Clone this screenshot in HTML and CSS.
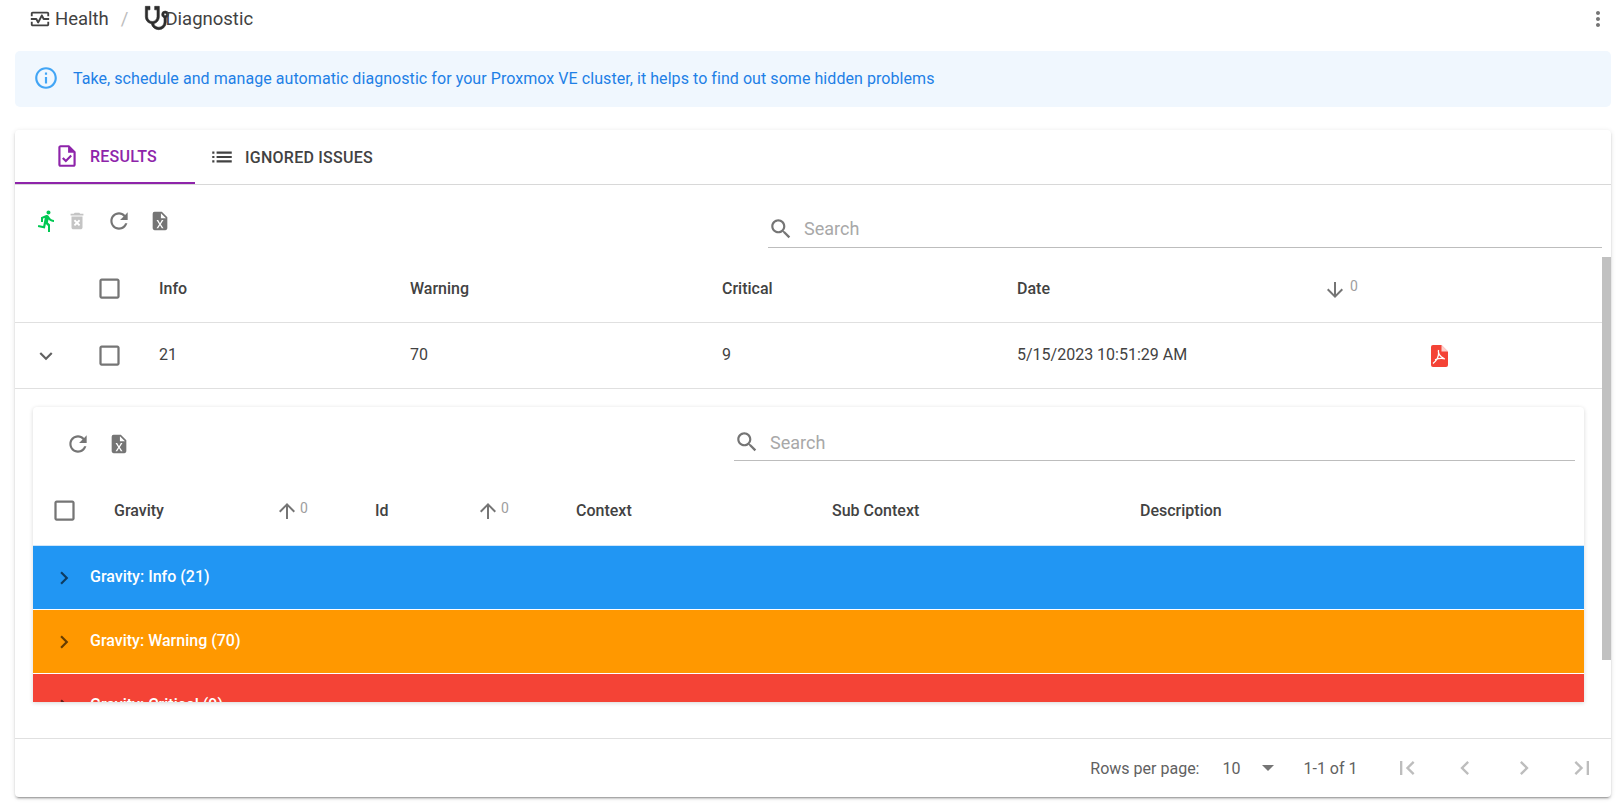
FILE: index.html
```html
<!DOCTYPE html>
<html lang="en">
<head>
    <meta charset="UTF-8">
    <meta name="viewport" content="width=device-width, initial-scale=1.0">
    <title>Health / Diagnostic</title>
    <link rel="stylesheet" href="styles.css">
</head>
<body>
    <svg class="sprite" xmlns="http://www.w3.org/2000/svg">
        <symbol id="i-health" viewBox="0 0 24 24"><path d="M20 4H4c-1.1 0-2 .9-2 2v3h2V6h16v3h2V6c0-1.1-.9-2-2-2zm0 14H4v-3H2v3c0 1.1.9 2 2 2h16c1.1 0 2-.9 2-2v-3h-2v3z"/><path d="M14.89 7.55c-.34-.68-1.45-.68-1.79 0L10 13.76l-1.11-2.21c-.17-.34-.51-.55-.89-.55H2v2h5.38l1.72 3.45c.18.34.52.55.9.55s.72-.21.89-.55L14 10.24l1.11 2.21c.17.34.51.55.89.55h6v-2h-5.38l-1.73-3.45z"/></symbol>
        <symbol id="i-stethoscope" viewBox="0 0 24 24"><path d="M19 8C19.56 8 20 8.43 20 9A1 1 0 0 1 19 10C18.43 10 18 9.55 18 9C18 8.43 18.43 8 19 8M2 2V11C2 13.96 4.19 16.5 7.14 16.91C7.76 19.92 10.42 22 13.5 22A6.5 6.5 0 0 0 20 15.5V11.81C21.16 11.39 22 10.29 22 9A3 3 0 0 0 19 6A3 3 0 0 0 16 9C16 10.29 16.84 11.4 18 11.81V15.41C18 17.91 16 19.91 13.5 19.91C11.5 19.91 9.82 18.7 9.22 16.9C12 16.3 14 13.8 14 11V2H10V5H12V11A4 4 0 0 1 8 15A4 4 0 0 1 4 11V5H6V2H2Z"/></symbol>
        <symbol id="i-more" viewBox="0 0 24 24"><path d="M12 8c1.1 0 2-.9 2-2s-.9-2-2-2-2 .9-2 2 .9 2 2 2zm0 2c-1.1 0-2 .9-2 2s.9 2 2 2 2-.9 2-2-.9-2-2-2zm0 6c-1.1 0-2 .9-2 2s.9 2 2 2 2-.9 2-2-.9-2-2-2z"/></symbol>
        <symbol id="i-info" viewBox="0 0 24 24"><path d="M11 7h2v2h-2zm0 4h2v6h-2zm1-9C6.48 2 2 6.48 2 12s4.48 10 10 10 10-4.48 10-10S17.52 2 12 2zm0 18c-4.41 0-8-3.59-8-8s3.59-8 8-8 8 3.59 8 8-3.59 8-8 8z"/></symbol>
        <symbol id="i-task" viewBox="0 0 24 24"><path d="M14 2H6c-1.1 0-1.99.9-1.99 2L4 20c0 1.1.89 2 1.99 2H18c1.1 0 2-.9 2-2V8l-6-6zm4 18H6V4h7v5h5v11zm-9.18-6.95L7.4 14.46 10.94 18l5.66-5.66-1.41-1.41-4.24 4.24-2.13-2.12z"/></symbol>
        <symbol id="i-list" viewBox="0 0 24 24"><path d="M3 13h2v-2H3v2zm0 4h2v-2H3v2zm0-8h2V7H3v2zm4 4h14v-2H7v2zm0 4h14v-2H7v2zM7 7v2h14V7H7z"/></symbol>
        <symbol id="i-run" viewBox="0 0 24 24"><path d="M13.49 5.48c1.1 0 2-.9 2-2s-.9-2-2-2-2 .9-2 2 .9 2 2 2zm-3.6 13.9l1-4.4 2.1 2v6h2v-7.5l-2.1-2 .6-3c1.3 1.5 3.3 2.5 5.5 2.5v-2c-1.9 0-3.5-1-4.3-2.4l-1-1.6c-.4-.6-1-1-1.7-1-.3 0-.5.1-.8.1l-5.2 2.2v4.7h2v-3.4l1.8-.7-1.6 8.1-4.9-1-.4 2 7 1.4z"/></symbol>
        <symbol id="i-delete" viewBox="0 0 24 24"><path d="M6 19c0 1.1.9 2 2 2h8c1.1 0 2-.9 2-2V7H6v12zm2.46-7.12l1.41-1.41L12 12.59l2.12-2.12 1.41 1.41L13.41 14l2.12 2.12-1.41 1.41L12 15.41l-2.12 2.12-1.41-1.41L10.59 14l-2.13-2.12zM15.5 4l-1-1h-5l-1 1H5v2h14V4z"/></symbol>
        <symbol id="i-refresh" viewBox="0 0 24 24"><path d="M17.65 6.35C16.2 4.9 14.21 4 12 4c-4.42 0-7.99 3.58-7.99 8s3.57 8 7.99 8c3.73 0 6.84-2.55 7.73-6h-2.08c-.82 2.33-3.04 4-5.65 4-3.31 0-6-2.69-6-6s2.69-6 6-6c1.66 0 3.14.69 4.22 1.78L13 11h7V4l-2.35 2.35z"/></symbol>
        <symbol id="i-xls" viewBox="0 0 24 24"><path d="M14 2H6a2 2 0 0 0-2 2v16a2 2 0 0 0 2 2h12a2 2 0 0 0 2-2V8l-6-6m1.8 18H14l-2-3.4-2 3.4H8.2l2.9-4.5L8.2 11H10l2 3.4 2-3.4h1.8l-2.9 4.5 2.9 4.5M13 9V3.5L18.5 9H13z"/></symbol>
        <symbol id="i-search" viewBox="0 0 24 24"><path d="M15.5 14h-.79l-.28-.27C15.41 12.59 16 11.11 16 9.5 16 5.91 13.09 3 9.5 3S3 5.91 3 9.5 5.91 16 9.5 16c1.61 0 3.09-.59 4.23-1.57l.27.28v.79l5 4.99L20.49 19l-4.99-5zm-6 0C7.01 14 5 11.99 5 9.5S7.01 5 9.5 5 14 7.01 14 9.5 11.99 14 9.5 14z"/></symbol>
        <symbol id="i-checkbox" viewBox="0 0 24 24"><path d="M19 5v14H5V5h14m0-2H5c-1.1 0-2 .9-2 2v14c0 1.1.9 2 2 2h14c1.1 0 2-.9 2-2V5c0-1.1-.9-2-2-2z"/></symbol>
        <symbol id="i-down" viewBox="0 0 24 24"><path d="M20 12l-1.41-1.41L13 16.17V4h-2v12.17l-5.58-5.59L4 12l8 8 8-8z"/></symbol>
        <symbol id="i-up" viewBox="0 0 24 24"><path d="M4 12l1.41 1.41L11 7.83V20h2V7.83l5.58 5.59L20 12l-8-8-8 8z"/></symbol>
        <symbol id="i-expand" viewBox="0 0 24 24"><path d="M16.59 8.59L12 13.17 7.41 8.59 6 10l6 6 6-6z"/></symbol>
        <symbol id="i-chevron" viewBox="0 0 24 24"><path d="M8.59 16.59L13.17 12 8.59 7.41 10 6l6 6-6 6-1.41-1.41z"/></symbol>
        <symbol id="i-first" viewBox="0 0 24 24"><path d="M18.41 16.59L13.82 12l4.59-4.59L17 6l-6 6 6 6zM6 6h2v12H6z"/></symbol>
        <symbol id="i-prev" viewBox="0 0 24 24"><path d="M15.41 7.41L14 6l-6 6 6 6 1.41-1.41L10.83 12z"/></symbol>
        <symbol id="i-next" viewBox="0 0 24 24"><path d="M10 6L8.59 7.41 13.17 12l-4.58 4.59L10 18l6-6z"/></symbol>
        <symbol id="i-last" viewBox="0 0 24 24"><path d="M5.59 7.41L10.18 12l-4.59 4.59L7 18l6-6-6-6zM16 6h2v12h-2z"/></symbol>
        <symbol id="i-pdf" viewBox="0 0 24 24"><path d="M6 1h8.5L21 7.5V21a2 2 0 0 1-2 2H6a2 2 0 0 1-2-2V3a2 2 0 0 1 2-2z" fill="#f44336"/><path d="M14.5 1v6.5H21z" fill="#fff" opacity=".75"/><path d="M11.5 6c-.7 3 .6 6 5.5 8.5M11.6 8c.3 4-2 8.600-5.600 11.500M8 15.800c3-1.300 6.500-1.800 10-1" fill="none" stroke="#fff" stroke-width="1.300"/></symbol>
    </svg>

    <div class="topbar">
        <div class="crumbs">
            <svg class="ico ico-health"><use href="#i-health"/></svg>
            <span>Health</span>
            <span class="crumb-sep">/</span>
            <svg class="ico ico-steth"><use href="#i-stethoscope"/></svg>
            <span class="crumb-last">Diagnostic</span>
        </div>
        <svg class="ico ico-more"><use href="#i-more"/></svg>
    </div>

    <div class="alert">
        <svg class="ico ico-info"><use href="#i-info"/></svg>
        <span class="alert-text">Take, schedule and manage automatic diagnostic for your Proxmox VE cluster, it helps to find out some hidden problems</span>
    </div>

    <div class="card">
        <div class="tabs">
            <div class="tab tab-active">
                <svg class="ico"><use href="#i-task"/></svg>
                <span>Results</span>
            </div>
            <div class="tab">
                <svg class="ico"><use href="#i-list"/></svg>
                <span>Ignored Issues</span>
            </div>
        </div>

        <div class="toolbar">
            <div class="actions">
                <svg class="ico act-run"><use href="#i-run"/></svg>
                <svg class="ico act-delete"><use href="#i-delete"/></svg>
                <svg class="ico act-refresh"><use href="#i-refresh"/></svg>
                <svg class="ico act-xls"><use href="#i-xls"/></svg>
            </div>
            <div class="search search-main">
                <svg class="ico"><use href="#i-search"/></svg>
                <span>Search</span>
            </div>
        </div>

        <div class="scroller">
            <div class="grid-row grid-head">
                <span></span>
                <svg class="ico check"><use href="#i-checkbox"/></svg>
                <span>Info</span>
                <span>Warning</span>
                <span>Critical</span>
                <span>Date</span>
                <span class="sort"><svg class="ico"><use href="#i-down"/></svg><sup>0</sup></span>
                <span></span>
            </div>
            <div class="grid-row grid-body">
                <svg class="ico expand"><use href="#i-expand"/></svg>
                <svg class="ico check"><use href="#i-checkbox"/></svg>
                <span>21</span>
                <span>70</span>
                <span>9</span>
                <span>5/15/2023 10:51:29 AM</span>
                <span></span>
                <svg class="ico pdf"><use href="#i-pdf"/></svg>
            </div>

            <div class="detail">
                <div class="inner-card">
                    <div class="toolbar inner-toolbar">
                        <div class="actions">
                            <svg class="ico act-refresh"><use href="#i-refresh"/></svg>
                            <svg class="ico act-xls"><use href="#i-xls"/></svg>
                        </div>
                        <div class="search search-inner">
                            <svg class="ico"><use href="#i-search"/></svg>
                            <span>Search</span>
                        </div>
                    </div>
                    <div class="inner-head">
                        <svg class="ico check"><use href="#i-checkbox"/></svg>
                        <span>Gravity</span>
                        <span class="sort"><svg class="ico"><use href="#i-up"/></svg><sup>0</sup></span>
                        <span>Id</span>
                        <span class="sort"><svg class="ico"><use href="#i-up"/></svg><sup>0</sup></span>
                        <span>Context</span>
                        <span>Sub Context</span>
                        <span>Description</span>
                    </div>
                    <div class="group group-info">
                        <svg class="ico"><use href="#i-chevron"/></svg>
                        <span>Gravity: Info (21)</span>
                    </div>
                    <div class="group group-warning">
                        <svg class="ico"><use href="#i-chevron"/></svg>
                        <span>Gravity: Warning (70)</span>
                    </div>
                    <div class="group group-critical">
                        <svg class="ico"><use href="#i-chevron"/></svg>
                        <span>Gravity: Critical (9)</span>
                    </div>
                </div>
            </div>
        </div>
        <div class="scroll-thumb"></div>

        <div class="pager">
            <span class="pager-label">Rows per page:</span>
            <span class="pager-size">10</span>
            <span class="pager-caret"></span>
            <span class="pager-range">1-1 of 1</span>
            <svg class="ico"><use href="#i-first"/></svg>
            <svg class="ico"><use href="#i-prev"/></svg>
            <svg class="ico"><use href="#i-next"/></svg>
            <svg class="ico"><use href="#i-last"/></svg>
        </div>
    </div>
</body>
</html>
```

FILE: styles.css
```css
* { margin: 0; padding: 0; box-sizing: border-box; }
html, body { height: 100%; overflow: hidden; }
body { font-family: Roboto, "Liberation Sans", sans-serif; font-size: 16px; color: #424242; background: #fff; }
.sprite { display: none; }
.ico { width: 24px; height: 24px; fill: currentColor; flex: none; display: block; }

/* top bar */
.topbar { height: 37px; display: flex; align-items: center; justify-content: space-between; padding: 0 8px 0 29px; }
.crumbs { display: flex; align-items: center; font-size: 18.5px; color: #424242; }
.ico-health { width: 22px; height: 22px; margin-right: 4px; }
.crumb-sep { margin: 0 15px 0 12px; color: #bdbdbd; }
.ico-steth { width: 28px; height: 28px; margin: -2px -6px 0 0; color: #2d2d2d; stroke: currentColor; stroke-width: 0.5; }
.ico-more { color: #757575; }

/* info banner */
.alert { height: 56px; margin: 14px 7px 23px 15px; padding: 0 0 2px 18px; display: flex; align-items: center; background: #f0f7fe; border-radius: 5px; color: #1e80e6; }
.alert-text { letter-spacing: 0.06px; }
.ico-info { width: 26px; height: 26px; margin-right: 14px; color: #42a5f5; }

/* main card */
.card { position: relative; height: 667px; margin: 0 7px 0 15px; display: flex; flex-direction: column; background: #fff; border-radius: 4px; box-shadow: 0 3px 1px -2px rgba(0,0,0,0.2), 0 2px 2px rgba(0,0,0,0.14), 0 1px 5px rgba(0,0,0,0.12); }
.tabs { height: 55px; flex: none; display: flex; border-bottom: 1px solid #d8d8d8; }
.tab { height: 54px; display: flex; align-items: center; font-weight: 500; letter-spacing: 0.25px; text-transform: uppercase; color: #424242; }
.tab-active { width: 180px; padding-left: 39px; gap: 10px; color: #8e24aa; border-bottom: 2px solid #8e24aa; }
.tab-active .ico { width: 26px; height: 26px; }
.tab:not(.tab-active) { padding-left: 14px; gap: 10px; }
.tab:not(.tab-active) .ico { width: 26px; height: 26px; }

/* toolbars */
.toolbar { height: 66px; flex: none; display: flex; justify-content: space-between; margin-right: 9px; }
.actions { display: flex; color: #757575; padding: 23px 0 0 20px; }
.act-run { color: #00c853; margin-top: 1px; }
.act-delete { margin-left: 7px; color: #c4c4c4; width: 22px; height: 22px; margin-top: 2px; }
.act-refresh { margin-left: 18px; width: 26px; height: 26px; }
.act-xls { margin-left: 17px; width: 22px; height: 22px; margin-top: 2px; }
.search { display: flex; align-items: center; gap: 10px; padding-bottom: 2px; border-bottom: 1px solid #bdbdbd; font-size: 18px; color: #a8a8a8; }
.search .ico { color: #757575; width: 26px; height: 26px; }
.search-main { width: 834px; height: 36px; margin-top: 27px; }
.search-inner { width: 841px; height: 36px; margin: 18px 9px 0 0; padding-bottom: 1px; }

/* results grid */
.scroller { flex: 1; min-height: 0; overflow: hidden; margin-right: 9px; }
.scroll-thumb { position: absolute; top: 127px; right: 0; width: 9px; height: 403px; background: #c1c1c1; }
.grid-row { display: grid; grid-template-columns: 62px 82px 251px 312px 295px 310px 105px 1fr; align-items: center; }
.grid-head { height: 72px; padding-top: 4px; font-weight: 500; border-bottom: 1px solid #e0e0e0; }
.grid-body { height: 66px; border-bottom: 1px solid #e0e0e0; }
.grid-body span { padding-bottom: 2px; }
.check { width: 27px; height: 27px; color: #757575; margin-left: 19px; }
.expand { width: 26px; height: 26px; margin-left: 18px; color: #616161; }
.pdf { width: 24px; height: 24px; margin-left: -5px; }
.sort { display: flex; align-items: flex-start; color: #757575; font-weight: 400; }
.sort .ico { width: 24px; height: 24px; margin: 2px 0 0 -4px; }
.sort sup { font-size: 14px; color: #9e9e9e; margin: 2px 0 0 3px; vertical-align: baseline; line-height: 16px; }

/* expanded detail */
.detail { padding: 18px 18px 0 18px; }
.inner-card { height: 295px; overflow: hidden; background: #fff; border-radius: 4px 4px 0 0; box-shadow: 0 1px 4px rgba(0,0,0,0.16); }
.inner-toolbar { height: 69px; margin-right: 0; }
.inner-toolbar .actions { padding: 24px 0 0 21px; }
.inner-toolbar .act-refresh { margin-left: 11px; }
.inner-toolbar .act-xls { margin-left: 17px; }
.inner-head { height: 69px; padding-bottom: 1px; display: grid; grid-template-columns: 81px 161px 100px 101px 100px 256px 308px 1fr; align-items: center; font-weight: 500; }
.inner-head .check { margin-left: 18px; }
.inner-head .sort .ico { margin-left: 0; }
.inner-head .sort sup { margin: 3px 0 0 1px; }
.group { height: 64px; padding: 0 0 2px 18px; display: flex; align-items: center; gap: 13px; font-weight: 500; color: #fff; border-top: 1px solid #fff; }
.group .ico { width: 26px; height: 26px; color: rgba(0,0,0,0.6); margin-top: 2px; }
.group-info { background: #2196f3; border-top-color: #cfe6fa; }
.group-warning { background: #ff9800; }
.group-critical { background: #f44336; }

/* pagination */
.pager { height: 59px; flex: none; display: flex; align-items: center; padding-right: 15px; justify-content: flex-end; border-top: 1px solid #e0e0e0; color: #616161; }
.pager-size { margin-left: 23px; }
.pager-caret { width: 0; height: 0; margin-left: 22px; border-left: 6.5px solid transparent; border-right: 6.5px solid transparent; border-top: 6px solid #757575; }
.pager-range { margin: 0 35px 0 29px; }
.pager .ico { width: 28px; height: 28px; color: #bdbdbd; margin-left: 30.5px; }
.pager .pager-range + .ico { margin-left: 0; }
```
